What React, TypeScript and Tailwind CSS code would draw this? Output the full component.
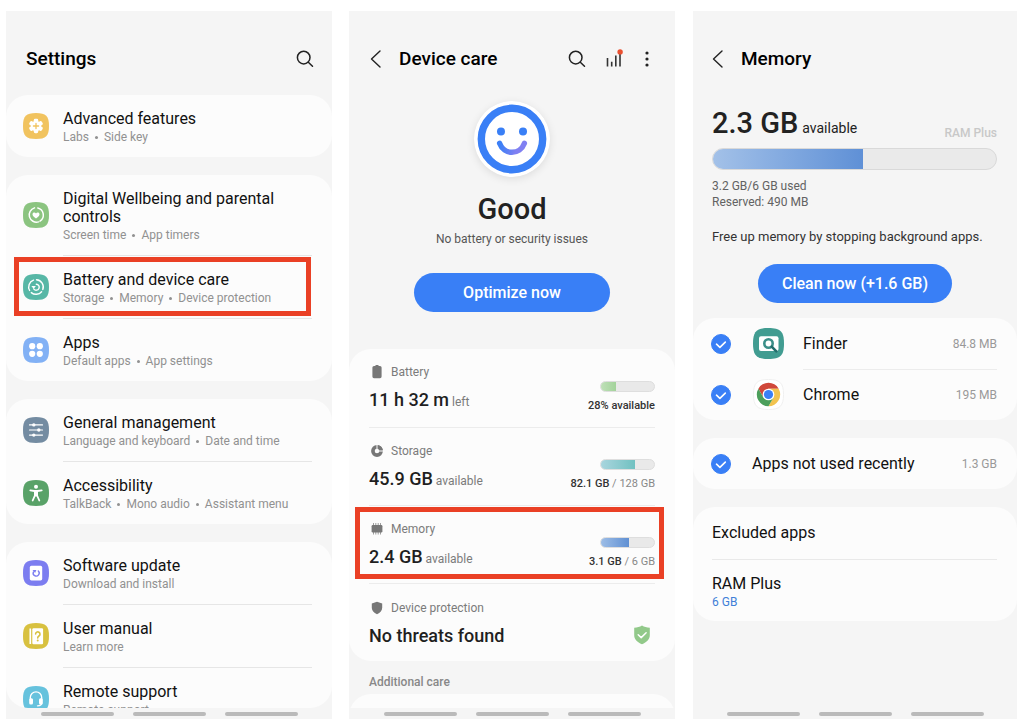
import { useState } from "react";
import type { ReactNode } from "react";

function BackIcon() {
  return (
    <svg width="12" height="18" viewBox="0 0 12 18" fill="none" stroke="#222" strokeWidth="1.4" strokeLinecap="round" strokeLinejoin="round">
      <path d="M10 1 1.500 9l8.500 8" />
    </svg>
  );
}

function SearchIcon() {
  return (
    <svg width="18" height="18" viewBox="0 0 18 18" fill="none" stroke="#222" strokeWidth="1.500" strokeLinecap="round">
      <circle cx="7.700" cy="7.600" r="6.300" />
      <path d="m12.300 12.200 4.200 4.100" />
    </svg>
  );
}

function SignalIcon() {
  return (
    <svg width="18" height="19" viewBox="0 0 18 19" fill="none">
      <path d="M1.500 9v8.500M5.700 12.800v4.700M9.800 6.500v11M14 4.500v13" stroke="#333" strokeWidth="1.600" />
      <circle cx="14.100" cy="2.900" r="2.700" fill="#ea5030" />
    </svg>
  );
}

function MoreIcon() {
  return (
    <svg width="6" height="18" viewBox="0 0 6 18" fill="#222">
      <circle cx="3" cy="3" r="1.600" />
      <circle cx="3" cy="9" r="1.600" />
      <circle cx="3" cy="15" r="1.600" />
    </svg>
  );
}

function Squircle({ color, children }: { color: string; children: ReactNode }) {
  return (
    <svg className="shrink-0" width="26" height="26" viewBox="0 0 26 26" fill="none" aria-hidden="true">
      <path d="M13 0c10 0 13 3 13 13s-3 13-13 13S0 23 0 13 3 0 13 0Z" fill={color} />
      {children}
    </svg>
  );
}

const icons = {
  advanced: (
    <Squircle color="#f1c35f">
      <g fill="#fff">
        <circle cx="13" cy="13" r="5.200" />
        <rect x="10.800" y="5.800" width="4.400" height="14.400" rx="1.400" />
        <rect x="10.800" y="5.800" width="4.400" height="14.400" rx="1.400" transform="rotate(60 13 13)" />
        <rect x="10.800" y="5.800" width="4.400" height="14.400" rx="1.400" transform="rotate(120 13 13)" />
      </g>
      <path d="M13 10.400v5.200M10.400 13h5.200" stroke="#f1c35f" strokeWidth="1.300" strokeLinecap="round" />
    </Squircle>
  ),
  wellbeing: (
    <Squircle color="#8bc480">
      <path d="M14.800 5.900a7.300 7.300 0 0 1 2.200 13.200M15.500 19.900A7.300 7.300 0 1 1 11.500 5.850" stroke="#fff" strokeWidth="1.500" strokeLinecap="round" />
      <path d="M13 16.500c-2.500-1.700-3.500-2.900-3.500-4.200 0-1.900 2.500-2.400 3.500-.8 1-1.600 3.500-1.100 3.500.8 0 1.300-1 2.500-3.500 4.200Z" fill="#fff" />
    </Squircle>
  ),
  care: (
    <Squircle color="#57b7a6">
      <path d="M10.500 6.100A7.300 7.300 0 0 0 6.600 16.500M8.300 18.600a7.300 7.300 0 0 0 10.300-.9M19.800 15.600A7.300 7.300 0 0 0 13.500 5.700" stroke="#fff" strokeWidth="1.400" strokeLinecap="round" />
      <path d="M13.300 10.200a3 3 0 1 1-2.400 4.900" stroke="#fff" strokeWidth="1.400" strokeLinecap="round" />
      <path d="m8.400 11.900 4.400.2-2.100 3Z" fill="#fff" />
    </Squircle>
  ),
  apps: (
    <Squircle color="#82b1f5">
      <g fill="#fff">
        <circle cx="9.200" cy="9.200" r="3.100" />
        <circle cx="16.800" cy="9.200" r="3.100" />
        <circle cx="9.200" cy="16.800" r="3.100" />
        <circle cx="16.800" cy="16.800" r="3.100" />
      </g>
    </Squircle>
  ),
  general: (
    <Squircle color="#748ca2">
      <path d="M6.500 7.900h13M6.500 13h13M6.500 18.100h13" stroke="#fff" strokeWidth="1.200" strokeLinecap="round" />
      <g fill="#fff">
        <circle cx="10.800" cy="7.900" r="1.700" />
        <circle cx="15.800" cy="13" r="1.700" />
        <circle cx="10.800" cy="18.100" r="1.700" />
      </g>
    </Squircle>
  ),
  accessibility: (
    <Squircle color="#59a268">
      <circle cx="13" cy="6.700" r="2" fill="#fff" />
      <path d="M7.300 10.300 11.500 11h3l4.200-.7M13 11.300v4.200M11.900 11.500v4l-2.200 5M14.100 11.500v4l2.200 5" stroke="#fff" strokeWidth="1.800" strokeLinecap="round" strokeLinejoin="round" />
    </Squircle>
  ),
  update: (
    <Squircle color="#7c7df0">
      <rect x="6.800" y="5.800" width="12.400" height="14.600" rx="1.600" fill="#fff" />
      <path d="M15.300 10.900a3 3 0 1 1-4.900 1" stroke="#7c7df0" strokeWidth="1.400" strokeLinecap="round" />
      <path d="M9.500 9.900h3.900l-1.300 3.200Z" fill="#7c7df0" />
    </Squircle>
  ),
  manual: (
    <Squircle color="#d8c140">
      <path d="M7.300 5.500v15.600" stroke="#fff" strokeWidth="1.700" />
      <rect x="9.300" y="5.200" width="10.800" height="16" rx="1.200" fill="#fff" />
      <path d="M12.600 11a2.200 2.200 0 1 1 3.300 2c-.8.500-1.200.9-1.200 1.900" stroke="#d8c140" strokeWidth="1.600" strokeLinecap="round" />
      <circle cx="14.700" cy="17.500" r="1" fill="#d8c140" />
    </Squircle>
  ),
  remote: (
    <Squircle color="#66c2dd">
      <path d="M7.300 14v-2.500a5.700 5.700 0 0 1 11.400 0V14M18.700 17c0 2-1.200 2.800-4.200 2.800" stroke="#fff" strokeWidth="1.300" strokeLinecap="round" />
      <rect x="6.200" y="12.300" width="3.800" height="6.300" rx="1.500" fill="#fff" />
      <rect x="16" y="12.300" width="3.800" height="6.300" rx="1.500" fill="#fff" />
    </Squircle>
  ),
};

type Setting = { icon: keyof typeof icons; title: string; details: string[]; highlighted?: boolean };

const settingGroups: Setting[][] = [
  [{ icon: "advanced", title: "Advanced features", details: ["Labs", "Side key"] }],
  [
    { icon: "wellbeing", title: "Digital Wellbeing and parental controls", details: ["Screen time", "App timers"] },
    { icon: "care", title: "Battery and device care", details: ["Storage", "Memory", "Device protection"], highlighted: true },
    { icon: "apps", title: "Apps", details: ["Default apps", "App settings"] },
  ],
  [
    { icon: "general", title: "General management", details: ["Language and keyboard", "Date and time"] },
    { icon: "accessibility", title: "Accessibility", details: ["TalkBack", "Mono audio", "Assistant menu"] },
  ],
  [
    { icon: "update", title: "Software update", details: ["Download and install"] },
    { icon: "manual", title: "User manual", details: ["Learn more"] },
    { icon: "remote", title: "Remote support", details: ["Remote support"] },
  ],
];

function NavBar() {
  return (
    <div className="flex h-[11px] shrink-0 items-center justify-center gap-[19px]">
      <span className="h-1 w-[73px] rounded-full bg-[#bababa]" />
      <span className="h-1 w-[73px] rounded-full bg-[#bababa]" />
      <span className="h-1 w-[73px] rounded-full bg-[#bababa]" />
    </div>
  );
}

function Screen({ children, className = "" }: { children: ReactNode; className?: string }) {
  return (
    <section className={`flex min-h-0 min-w-0 flex-col bg-[#f5f5f5] ${className}`}>
      {children}
      <NavBar />
    </section>
  );
}

function SettingsScreen() {
  return (
    <Screen>
      <header className="flex h-[84px] shrink-0 items-center justify-between pt-[11px] pr-[18px] pl-5">
        <h1 className="text-[19px] leading-6 font-medium text-black">Settings</h1>
        <button type="button" aria-label="Search settings"><SearchIcon /></button>
      </header>
      <div className="min-h-0 flex-1 overflow-hidden rounded-b-[22px]">
        <nav className="flex flex-col gap-[18px]">
          {settingGroups.map((group) => (
            <ul key={group[0].title} className="rounded-[22px] bg-[#fcfcfc]">
              {group.map((item, i) => (
                <li key={item.title} className="relative">
                  {i > 0 && <div className="mr-5 ml-[57px] h-px bg-[#e6e6e6]" />}
                  <a href="#" className="flex items-center gap-3.5 py-[11px] pr-5 pl-[17px]">
                    {icons[item.icon]}
                    <span className="flex flex-col pt-1">
                      <span className="text-[16px] leading-[18px] text-[#111]">{item.title}</span>
                      <span className="flex text-[12px] leading-[18px] text-[#919191]">
                        {item.details.map((d, n) => (
                          <span key={d} className="flex items-center">
                            {n > 0 && <span className="mx-1.5 size-[3px] rounded-full bg-[#919191]" />}
                            {d}
                          </span>
                        ))}
                      </span>
                    </span>
                  </a>
                  {item.highlighted && (
                    <div className="pointer-events-none absolute top-0.5 right-[21px] bottom-0.5 left-2 border-[5px] border-[#ea4025]" />
                  )}
                </li>
              ))}
            </ul>
          ))}
        </nav>
      </div>
    </Screen>
  );
}

function SmileIcon() {
  return (
    <svg width="76" height="76" viewBox="0 0 78 78" fill="none" className="rounded-full shadow-[0_2px_8px_rgba(0,0,0,0.1)]" aria-hidden="true">
      <defs>
        <linearGradient id="smile" x1="24" y1="40" x2="54" y2="48" gradientUnits="userSpaceOnUse">
          <stop offset="0.150" stopColor="#3c7ff6" />
          <stop offset="0.700" stopColor="#8080f2" />
        </linearGradient>
      </defs>
      <circle cx="39" cy="39" r="39" fill="#fff" />
      <circle cx="39" cy="39" r="31.500" stroke="#397ff6" strokeWidth="7.600" />
      <circle cx="27.700" cy="31.400" r="4.100" fill="#397ff6" />
      <circle cx="50.300" cy="31.400" r="4.100" fill="#397ff6" />
      <path d="M26.300 43.500c4.500 12.200 20.900 12.200 25.400 0" stroke="url(#smile)" strokeWidth="5.600" strokeLinecap="round" />
    </svg>
  );
}

const careIcons = {
  battery: <path d="M6.500 0h3v1H11a1.600 1.600 0 0 1 1.600 1.600v9A1.600 1.600 0 0 1 11 13.200H5a1.600 1.600 0 0 1-1.600-1.600v-9A1.600 1.600 0 0 1 5 1h1.500Z" fill="#777" />,
  storage: (
    <>
      <circle cx="8" cy="7" r="4.100" stroke="#777" strokeWidth="3.600" fill="none" />
      <path d="M8 7V.5M8 7h6.500" stroke="#fcfcfc" strokeWidth="1" />
      <path d="M9 1.200A5.900 5.900 0 0 1 13.800 6H10.300A2.300 2.300 0 0 0 9 4.800Z" fill="#777" />
    </>
  ),
  memory: (
    <>
      <rect x="2.600" y="3" width="10.800" height="7.400" rx="1.200" fill="#777" />
      <path d="M4.500 1v11.500M6.800 1v11.500M9.200 1v11.500M11.500 1v11.500" stroke="#777" strokeWidth="1" opacity="0.700" />
    </>
  ),
  shield: <path d="M8 .8 13.200 2.400v4.400c0 3-2 5-5.200 6.400-3.200-1.400-5.200-3.400-5.200-6.400V2.400Z" fill="#777" />,
};

type CareItem = {
  icon: keyof typeof careIcons;
  label: string;
  value: string;
  unit?: string;
  percent?: number;
  fill?: string;
  strong?: string;
  rest?: string;
  highlighted?: boolean;
};

const careItems: CareItem[] = [
  { icon: "battery", label: "Battery", value: "11 h 32 m", unit: "left", percent: 28, fill: "bg-linear-to-r from-[#bfe0b8] to-[#a3d39b]", strong: "28% available" },
  { icon: "storage", label: "Storage", value: "45.9 GB", unit: "available", percent: 64, fill: "bg-linear-to-r from-[#a9d5de] to-[#70c1c1]", strong: "82.1 GB", rest: "/ 128 GB" },
  { icon: "memory", label: "Memory", value: "2.4 GB", unit: "available", percent: 52, fill: "bg-linear-to-r from-[#9dbde6] to-[#6090d3]", strong: "3.1 GB", rest: "/ 6 GB", highlighted: true },
  { icon: "shield", label: "Device protection", value: "No threats found" },
];

function ShieldCheck() {
  return (
    <svg width="18" height="20" viewBox="0 0 18 20" fill="none" aria-hidden="true">
      <path d="M9 .6c2.300 1.400 4.700 2 7.800 2.100v7.600c0 4-3 7-7.800 9-4.800-2-7.800-5-7.800-9V2.700C4.300 2.600 6.700 2 9 .6Z" fill="#92c98a" />
      <path d="m5.200 9.700 3 2.900 4.900-4.800" stroke="#fff" strokeWidth="1.500" strokeLinecap="round" strokeLinejoin="round" />
    </svg>
  );
}

function DeviceCareScreen() {
  return (
    <Screen>
      <header className="flex h-[84px] shrink-0 items-center pt-[11px] pr-[25px] pl-[21px]">
        <button type="button" aria-label="Back"><BackIcon /></button>
        <h1 className="ml-[17px] flex-1 text-[19px] leading-6 font-medium text-black">Device care</h1>
        <div className="flex items-center gap-5">
          <button type="button" aria-label="Search"><SearchIcon /></button>
          <button type="button" aria-label="Usage"><SignalIcon /></button>
          <button type="button" aria-label="More options"><MoreIcon /></button>
        </div>
      </header>
      <div className="flex min-h-0 flex-1 flex-col overflow-hidden">
        <div className="flex shrink-0 flex-col items-center pt-1.5 pb-[37px]">
          <SmileIcon />
          <h2 className="mt-4 text-[29px] leading-8 font-medium text-[#222]">Good</h2>
          <p className="mt-1.5 text-[12px] leading-4 text-[#555]">No battery or security issues</p>
          <button type="button" className="mt-[26px] h-[39px] w-[60%] rounded-full bg-[#397ff6] text-[16px] font-medium text-white">
            Optimize now
          </button>
        </div>
        <ul className="shrink-0 rounded-[22px] bg-[#fcfcfc] px-5">
          {careItems.map((item, i) => (
            <li key={item.label} className={`relative flex h-[78px] justify-between ${i > 0 ? "border-t border-[#ececec]" : ""}`}>
              <div className="flex flex-col justify-center gap-2 pt-0.5">
                <div className="flex items-center gap-1.5 text-[12px] leading-4 text-[#7b7b7b]">
                  <svg width="16" height="14" viewBox="0 0 16 14" aria-hidden="true">{careIcons[item.icon]}</svg>
                  {item.label}
                </div>
                <p className="text-[18px] leading-6 font-medium text-[#1f1f1f]">
                  {item.value}
                  {item.unit && <span className="ml-[3px] text-[12px] font-normal text-[#7b7b7b]">{item.unit}</span>}
                </p>
              </div>
              {item.percent !== undefined ? (
                <div className="flex flex-col items-end justify-end gap-1.5 pb-[13px]">
                  <div className="h-[11px] w-[55px] overflow-hidden rounded-full border border-[#dedede] bg-[#e9e9e9]">
                    <div className={`h-full ${item.fill}`} style={{ width: `${item.percent}%` }} />
                  </div>
                  <p className="text-[11px] leading-4 text-[#888]">
                    <span className="font-medium text-[#333]">{item.strong}</span> {item.rest}
                  </p>
                </div>
              ) : (
                <div className="flex items-end pr-1 pb-4"><ShieldCheck /></div>
              )}
              {item.highlighted && (
                <div className="pointer-events-none absolute top-px -right-[9px] bottom-1 -left-3.5 border-[5px] border-[#ea4025]" />
              )}
            </li>
          ))}
        </ul>
        <h3 className="shrink-0 px-5 pt-[13px] pb-1 text-[12px] leading-4 font-medium text-[#888]">Additional care</h3>
        <div className="h-16 shrink-0 rounded-[22px] bg-[#fcfcfc]" />
      </div>
    </Screen>
  );
}

function Check({ checked, onChange }: { checked: boolean; onChange: () => void }) {
  return (
    <span className="relative size-5 shrink-0">
      <input
        type="checkbox"
        checked={checked}
        onChange={onChange}
        className="block size-5 appearance-none rounded-full border border-[#bbb] checked:border-[#397ff6] checked:bg-[#397ff6]"
      />
      <svg className="pointer-events-none absolute inset-0" width="20" height="20" viewBox="0 0 20 20" fill="none" stroke="#fff" strokeWidth="1.600" strokeLinecap="round" strokeLinejoin="round" aria-hidden="true">
        <path d="m5.500 10.200 3.400 3.100 5.400-5.200" />
      </svg>
    </span>
  );
}

function FinderIcon() {
  return (
    <svg width="31" height="31" viewBox="0 0 31 31" fill="none" className="shrink-0" aria-hidden="true">
      <path d="M15.500 0C27.500 0 31 3.500 31 15.500S27.500 31 15.500 31 0 27.500 0 15.500 3.500 0 15.500 0Z" fill="#419c91" />
      <rect x="6" y="8.300" width="19.500" height="14.600" rx="2" fill="#fff" />
      <circle cx="15.500" cy="15.500" r="4.200" stroke="#3b8f89" strokeWidth="2.600" />
      <path d="m18.700 18.700 4.600 4.600" stroke="#246e6c" strokeWidth="2.600" strokeLinecap="round" />
    </svg>
  );
}

function ChromeIcon() {
  return (
    <svg width="31" height="31" viewBox="0 0 31 31" className="shrink-0" aria-hidden="true">
      <path d="M15.500.5C27 .500 30.500 4 30.500 15.500S27 30.500 15.500 30.500.5 27 .500 15.500 4 .500 15.500.5Z" fill="#fff" stroke="#f0f0f0" />
      <path d="M5.370 9.650A11.700 11.700 0 0 1 25.630 9.650H15.500l-5.070 8.780Z" fill="#d0473a" />
      <path d="M25.630 9.650A11.700 11.700 0 0 1 15.500 27.200L20.570 18.430 15.500 9.650Z" fill="#f2c34f" />
      <path d="M15.500 27.200A11.700 11.700 0 0 1 5.370 9.650L10.430 18.430H20.570Z" fill="#4c9f5b" />
      <circle cx="15.500" cy="15.500" r="5.850" fill="#fff" />
      <circle cx="15.500" cy="15.500" r="4.600" fill="#397ff6" />
    </svg>
  );
}

function MemoryScreen() {
  const [selected, setSelected] = useState<Record<string, boolean>>({ Finder: true, Chrome: true, unused: true });
  const toggle = (name: string) => setSelected((s) => ({ ...s, [name]: !s[name] }));

  return (
    <Screen className="ml-px">
      <header className="flex h-[84px] shrink-0 items-center gap-[17px] pt-[11px] pl-[19px]">
        <button type="button" aria-label="Back"><BackIcon /></button>
        <h1 className="text-[19px] leading-6 font-medium text-black">Memory</h1>
      </header>
      <div className="min-h-0 flex-1 overflow-hidden">
        <div className="pt-3 pr-5 pl-[19px]">
          <div className="flex items-end justify-between">
            <p className="text-[29px] leading-8 font-medium text-[#222]">
              2.3 GB<span className="ml-1 text-[14px] font-normal">available</span>
            </p>
            <span className="pb-[3px] text-[12px] leading-4 font-medium text-[#c8c8c8]">RAM Plus</span>
          </div>
          <div className="mt-1 h-[22px] overflow-hidden rounded-full border border-[#d9d9d9] bg-[#eaeaea]">
            <div className="h-full bg-linear-to-r from-[#a3c1e8] to-[#5f90d6]" style={{ width: "53%" }} />
          </div>
          <p className="mt-2 text-[12px] leading-4 text-[#626262]">3.2 GB/6 GB used</p>
          <p className="text-[12px] leading-4 text-[#626262]">Reserved: 490 MB</p>
          <p className="mt-[19px] text-[13px] leading-4 whitespace-nowrap text-[#333]">Free up memory by stopping background apps.</p>
        </div>
        <div className="mt-[19px] flex justify-center">
          <button type="button" className="h-[39px] w-[60%] rounded-full bg-[#397ff6] text-[16px] font-medium text-white">
            Clean now (+1.6 GB)
          </button>
        </div>
        <div className="mt-[15px] flex flex-col gap-[18px]">
          <div className="rounded-[22px] bg-[#fcfcfc]">
            {[
              { name: "Finder", size: "84.8 MB", icon: <FinderIcon /> },
              { name: "Chrome", size: "195 MB", icon: <ChromeIcon /> },
            ].map((app, i) => (
              <label key={app.name} className="flex h-[51px] items-center pr-5 pl-[18px]">
                <Check checked={selected[app.name]} onChange={() => toggle(app.name)} />
                <span className="mr-[19px] ml-[22px]">{app.icon}</span>
                <span className={`flex h-full flex-1 items-center justify-between ${i > 0 ? "border-t border-[#ececec]" : ""}`}>
                  <span className="text-[16px] leading-5 text-[#111]">{app.name}</span>
                  <span className="text-[12px] leading-5 text-[#999]">{app.size}</span>
                </span>
              </label>
            ))}
          </div>
          <label className="flex h-[51px] items-center rounded-[22px] bg-[#fcfcfc] pr-5 pl-[18px]">
            <Check checked={selected.unused} onChange={() => toggle("unused")} />
            <span className="ml-[21px] flex-1 text-[16px] leading-5 text-[#111]">Apps not used recently</span>
            <span className="text-[12px] leading-5 text-[#999]">1.3 GB</span>
          </label>
          <div className="rounded-[22px] bg-[#fcfcfc] pr-5 pl-[19px]">
            <a href="#" className="block py-4 text-[16px] leading-5 text-[#111]">Excluded apps</a>
            <a href="#" className="flex flex-col border-t border-[#e9e9e9] pt-[15px] pb-2.5">
              <span className="text-[16px] leading-[18px] text-[#111]">RAM Plus</span>
              <span className="text-[12px] leading-[18px] text-[#3f80d8]">6 GB</span>
            </a>
          </div>
        </div>
      </div>
    </Screen>
  );
}

export default function App() {
  return (
    <main className="grid h-screen grid-cols-[326fr_326fr_325fr] grid-rows-[minmax(0,1fr)] gap-[17px] bg-white pt-[11px] pr-[7px] pb-2 pl-1.5 font-['Roboto',sans-serif]">
      <SettingsScreen />
      <DeviceCareScreen />
      <MemoryScreen />
    </main>
  );
}
